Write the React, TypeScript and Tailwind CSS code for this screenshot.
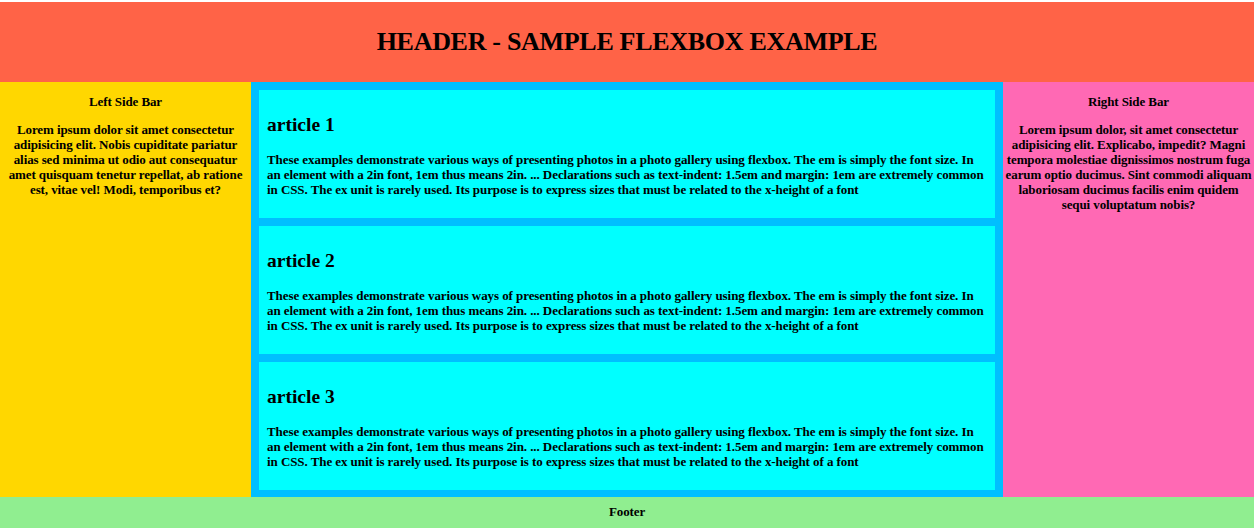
export default function App() {
  const articles = ["article 1", "article 2", "article 3"];
  const articleText =
    "These examples demonstrate various ways of presenting photos in a photo gallery using flexbox. The em is simply the font size. In an element with a 2in font, 1em thus means 2in. ... Declarations such as text-indent: 1.5em and margin: 1em are extremely common in CSS. The ex unit is rarely used. Its purpose is to express sizes that must be related to the x-height of a font";

  return (
    <div className="min-h-screen bg-white pt-[2px] font-['Liberation_Serif',serif] text-[13px] font-bold leading-[15px] tracking-[-0.1px] text-black">
      <div className="w-[1254px]">
        <header className="flex h-[80px] items-center justify-center bg-[#ff6347]">
          <h1 className="text-[26px] leading-[30px] font-bold tracking-[-0.3px]">
            HEADER - SAMPLE FLEXBOX EXAMPLE
          </h1>
        </header>

        <div className="flex">
          <aside className="w-[251px] shrink-0 bg-[#ffd700] px-[3px] text-center">
            <p className="mt-[12px]">Left Side Bar</p>
            <p className="mt-[13px]">
              Lorem ipsum dolor sit amet consectetur adipisicing elit. Nobis
              cupiditate pariatur alias sed minima ut odio aut consequatur amet
              quisquam tenetur repellat, ab ratione est, vitae vel! Modi,
              temporibus et?
            </p>
          </aside>

          <main className="flex w-[752px] shrink-0 flex-col gap-[8px] bg-[#00bfff] px-[8px] pt-[8px] pb-[7px]">
            {articles.map((title) => (
              <article key={title} className="flex-1 bg-[#00ffff] px-[8px] py-[8px]">
                <h2 className="mt-[16px] text-[19.5px] leading-[22px] font-bold tracking-normal">
                  {title}
                </h2>
                <p className="mt-[16px] mb-[13px] tracking-[-0.07px]">{articleText}</p>
              </article>
            ))}
          </main>

          <aside className="w-[251px] shrink-0 bg-[#ff69b4] px-[2px] text-center">
            <p className="mt-[12px]">Right Side Bar</p>
            <p className="mt-[13px]">
              Lorem ipsum dolor, sit amet consectetur adipisicing elit.
              Explicabo, impedit? Magni tempora molestiae dignissimos nostrum
              fuga earum optio ducimus. Sint commodi aliquam laboriosam ducimus
              facilis enim quidem sequi voluptatum nobis?
            </p>
          </aside>
        </div>

        <footer className="bg-[#90ee90] pt-[7px] pb-[9px] text-center">Footer</footer>
      </div>
    </div>
  );
}
